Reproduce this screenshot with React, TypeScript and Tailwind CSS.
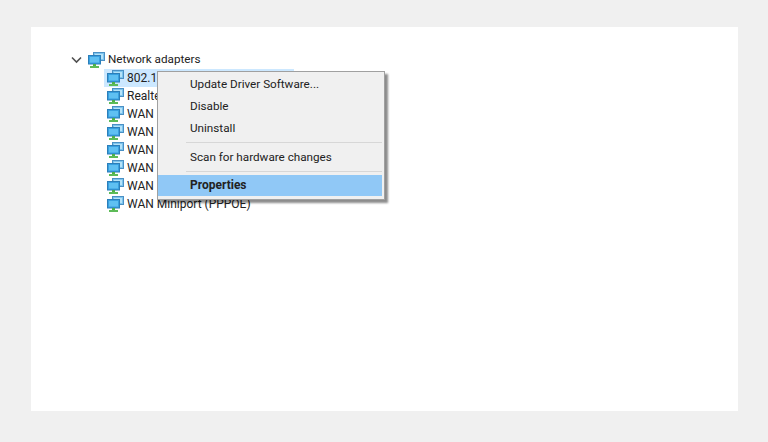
const devices = ['802.1', 'Realte', 'WAN', 'WAN', 'WAN', 'WAN', 'WAN', 'WAN Miniport (PPPOE)']

function NetworkIcon() {
  return (
    <svg width="17" height="16" viewBox="0 0 17 16" className="shrink-0">
      <rect x="5.5" y="0.5" width="11" height="8" fill="#7cc4ee" stroke="#4a90c4" />
      <rect x="7" y="2" width="8" height="5" fill="#b5e2f8" />
      <rect x="0.5" y="3.5" width="12" height="8.5" fill="#39a0e0" stroke="#2b7fba" />
      <rect x="2" y="5" width="9" height="5.5" fill="#5fc0f2" />
      <rect x="5" y="12" width="3" height="2" fill="#4fb04a" />
      <rect x="2" y="14" width="9" height="2" fill="#5dbb58" />
    </svg>
  )
}

function MenuItem({ label }: { label: string }) {
  return <div className="h-[22px] pl-[32px] leading-[22px]">{label}</div>
}

function Separator() {
  return <div className="my-[3px] ml-[28px] h-px bg-[#d7d7d7]" />
}

export default function App() {
  return (
    <div className="h-[442px] w-[768px] overflow-hidden bg-[#f0f0f0] pb-[31px] pl-[31px] pr-[30px] pt-[27px] font-['Roboto',sans-serif] text-[11.7px] text-[#222222]">
      <div className="relative h-[384px] bg-white pl-[39px] pt-[24px]">
        <div className="flex h-[18px] items-center">
          <svg width="14" height="14" viewBox="0 0 14 14" className="shrink-0">
            <path d="M2 4.5 L6.5 9 L11 4.5" fill="none" stroke="#505050" strokeWidth="1.6" />
          </svg>
          <div className="ml-[4px] flex items-center gap-[3px]">
            <NetworkIcon />
            <span>Network adapters</span>
          </div>
        </div>
        <div className="ml-[34px] text-[12px]">
          {devices.map((device, i) => (
            <div
              key={device + i}
              className={`flex h-[18px] items-center gap-[3px] whitespace-nowrap pl-[3px] ${i === 0 ? 'w-[190px] bg-[#cce8ff]' : ''}`}
            >
              <NetworkIcon />
              <span>{device}</span>
            </div>
          ))}
        </div>

        <div className="absolute left-[126px] top-[44px] h-[129px] w-[228px] border border-[#a0a0a0] bg-[#f0f0f0] pb-[2px] pr-[2px] pt-[1px] shadow-[3px_3px_2px_rgba(0,0,0,0.45)]">
          <MenuItem label="Update Driver Software..." />
          <MenuItem label="Disable" />
          <MenuItem label="Uninstall" />
          <Separator />
          <MenuItem label="Scan for hardware changes" />
          <Separator />
          <div className="h-[21px] bg-[#90c8f6] pl-[32px] text-[12px] font-bold leading-[21px]">Properties</div>
        </div>
      </div>
    </div>
  )
}
